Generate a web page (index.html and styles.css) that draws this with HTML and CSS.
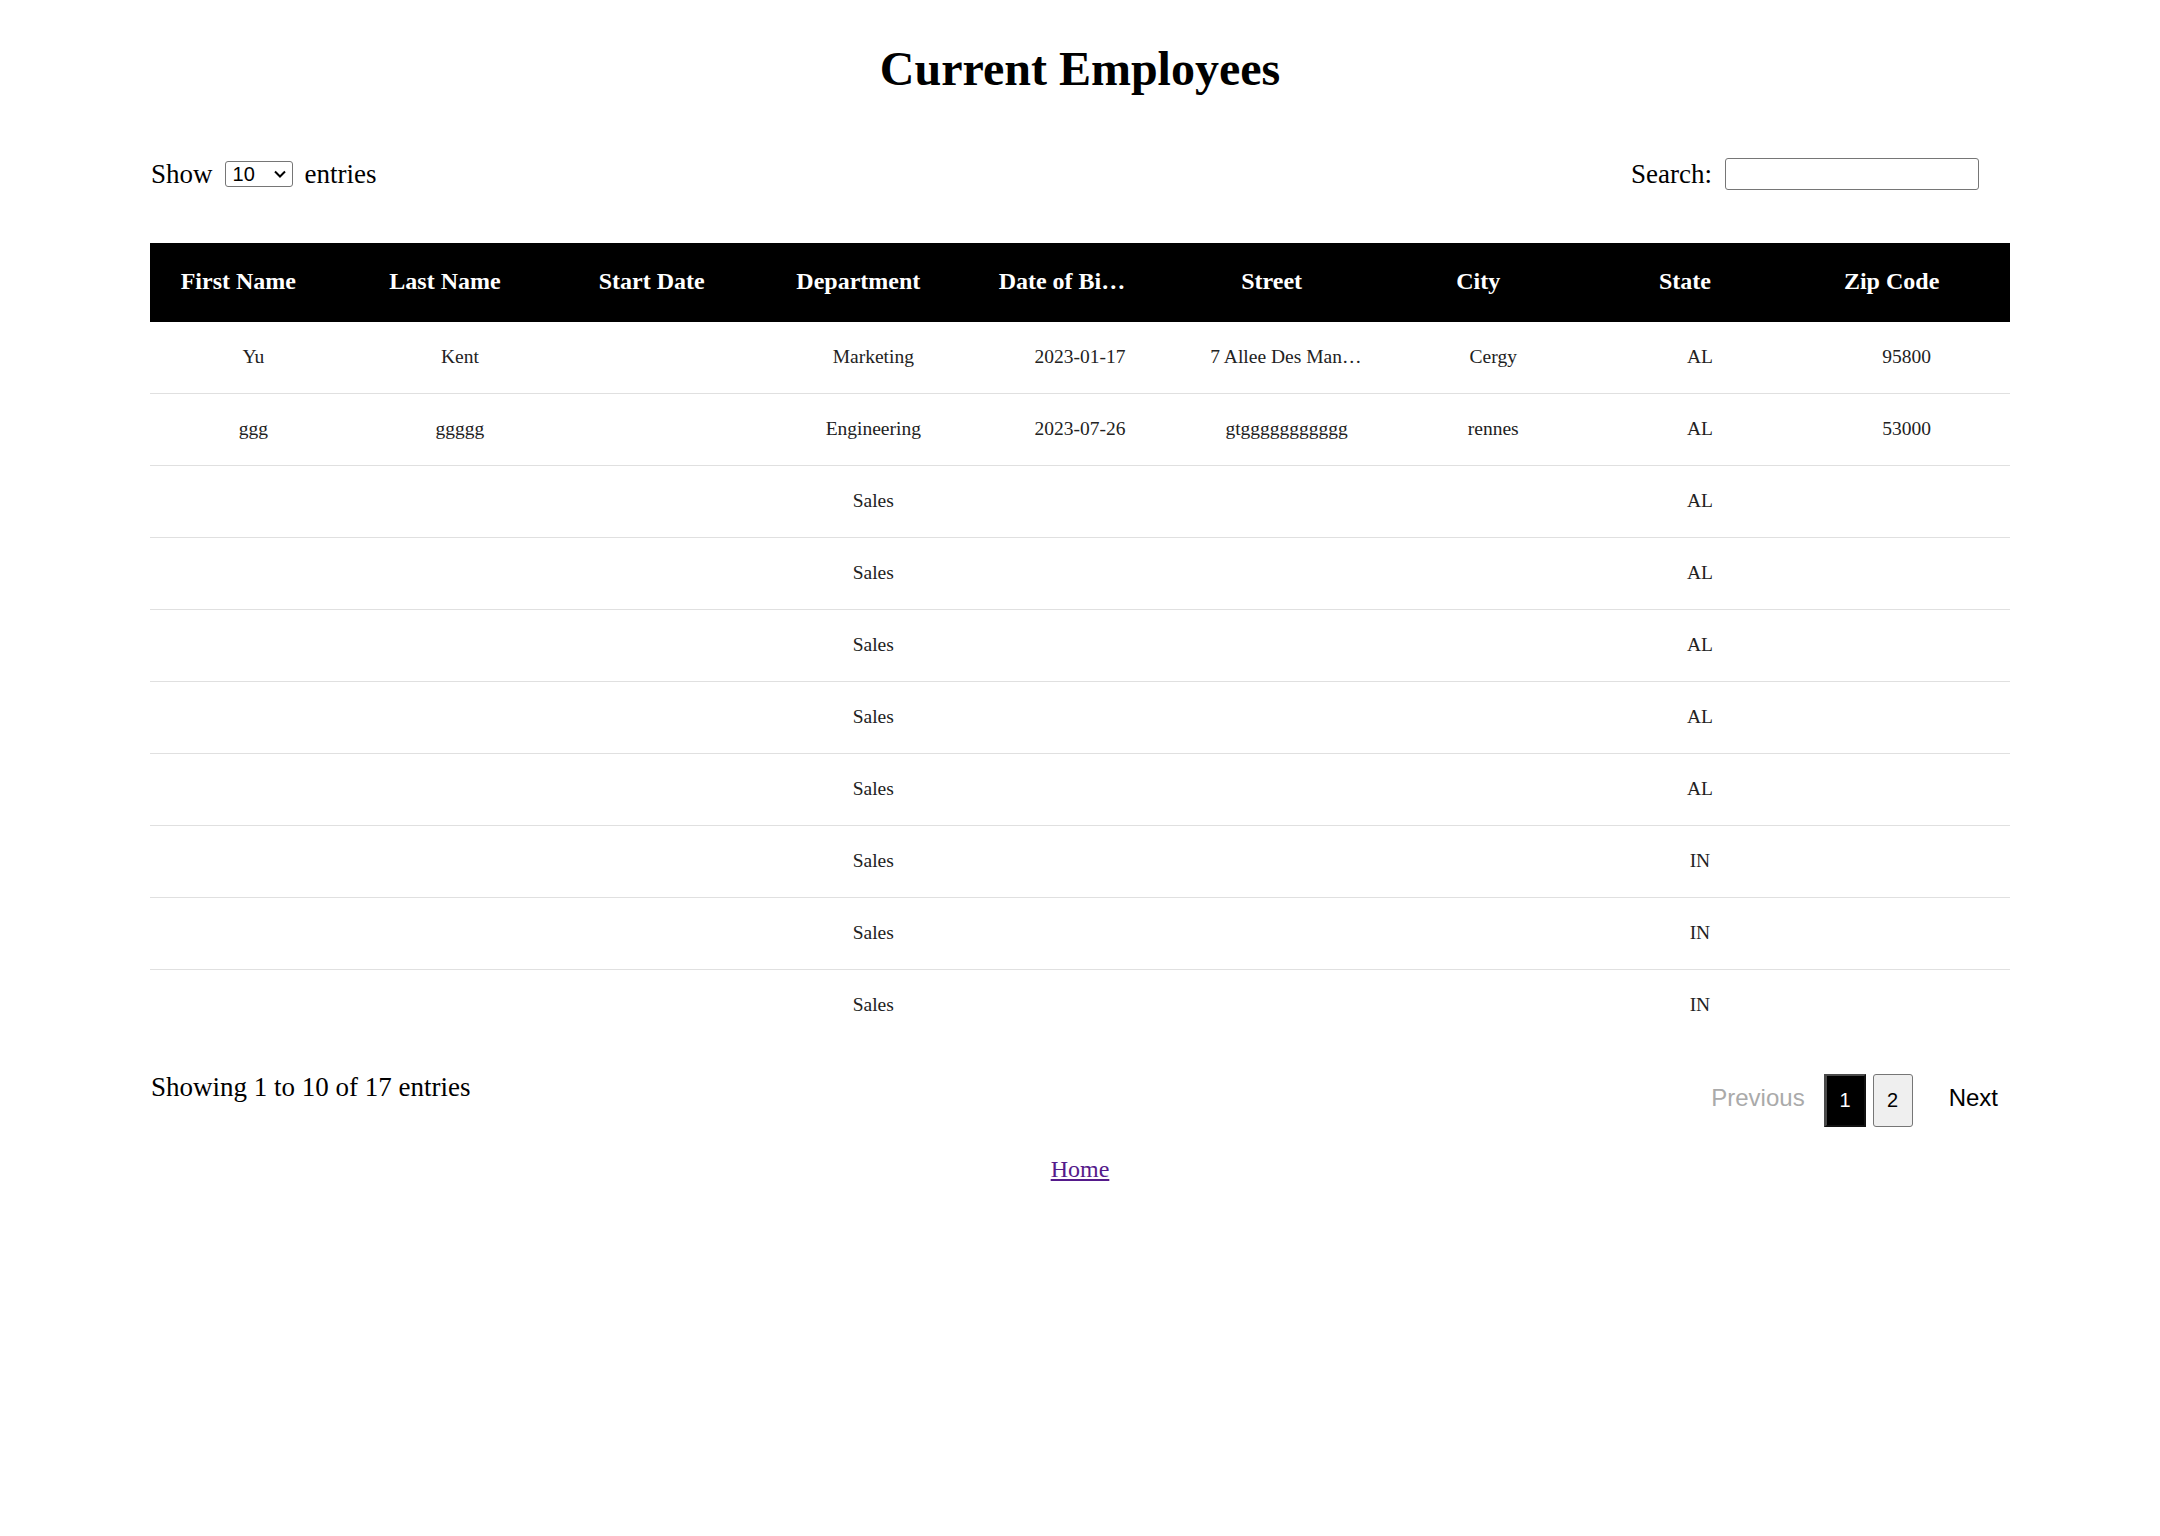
FILE: index.html
```html
<!DOCTYPE html>
<html lang="en">
<head>
<meta charset="utf-8">
<title>Current Employees</title>
<link rel="stylesheet" href="styles.css">
</head>
<body>
<div class="page">
  <h1 class="title">Current Employees</h1>

  <div class="controls">
    <label class="length">
      <span>Show</span>
      <span class="select-box">
        <select class="select"><option>10</option><option>25</option><option>50</option><option>100</option></select>
        <svg class="chev" width="12" height="8" viewBox="0 0 12 8"><path d="M1 1.5 L6 6.5 L11 1.5" fill="none" stroke="#000" stroke-width="2"/></svg>
      </span>
      <span>entries</span>
    </label>
    <label class="search">
      <span>Search:</span>
      <input class="search-input" type="search">
    </label>
  </div>

  <table class="grid">
    <thead>
      <tr class="head-row">
        <th>First Name</th><th>Last Name</th><th>Start Date</th><th>Department</th><th>Date of Birth</th><th>Street</th><th>City</th><th>State</th><th>Zip Code</th>
      </tr>
    </thead>
    <tbody>
      <tr><td>Yu</td><td>Kent</td><td></td><td>Marketing</td><td>2023-01-17</td><td>7 Allee Des Manants</td><td>Cergy</td><td>AL</td><td>95800</td></tr>
      <tr><td>ggg</td><td>ggggg</td><td></td><td>Engineering</td><td>2023-07-26</td><td>gtggggggggggg</td><td>rennes</td><td>AL</td><td>53000</td></tr>
      <tr><td></td><td></td><td></td><td>Sales</td><td></td><td></td><td></td><td>AL</td><td></td></tr>
      <tr><td></td><td></td><td></td><td>Sales</td><td></td><td></td><td></td><td>AL</td><td></td></tr>
      <tr><td></td><td></td><td></td><td>Sales</td><td></td><td></td><td></td><td>AL</td><td></td></tr>
      <tr><td></td><td></td><td></td><td>Sales</td><td></td><td></td><td></td><td>AL</td><td></td></tr>
      <tr><td></td><td></td><td></td><td>Sales</td><td></td><td></td><td></td><td>AL</td><td></td></tr>
      <tr><td></td><td></td><td></td><td>Sales</td><td></td><td></td><td></td><td>IN</td><td></td></tr>
      <tr><td></td><td></td><td></td><td>Sales</td><td></td><td></td><td></td><td>IN</td><td></td></tr>
      <tr><td></td><td></td><td></td><td>Sales</td><td></td><td></td><td></td><td>IN</td><td></td></tr>
    </tbody>
  </table>

  <div class="footer">
    <div class="info">Showing 1 to 10 of 17 entries</div>
    <div class="pager">
      <span class="pager-link disabled prev">Previous</span>
      <button class="page-btn current" type="button">1</button>
      <button class="page-btn" type="button">2</button>
      <span class="pager-link next">Next</span>
    </div>
  </div>

  <div class="home-wrap"><a class="home" href="#">Home</a></div>
</div>
</body>
</html>
```

FILE: styles.css
```css
html, body {
  margin: 0;
  padding: 0;
  background: #fff;
}

body {
  font-family: "Liberation Serif", "Times New Roman", serif;
  color: #000;
}

.page {
  width: 1860px;
  margin: 0 auto;
}

.title {
  margin: 41px 0 0 0;
  font-size: 48px;
  line-height: 56px;
  font-weight: bold;
  text-align: center;
}

.controls {
  margin-top: 61px;
  height: 32px;
  display: flex;
  justify-content: space-between;
  align-items: center;
  font-size: 27px;
  line-height: 32px;
}

.length,
.search {
  display: flex;
  align-items: center;
}

.length {
  gap: 12px;
  padding-left: 1px;
}

.search {
  gap: 13px;
  margin-right: 31px;
}

.select-box {
  display: inline-flex;
  align-items: center;
  box-sizing: border-box;
  width: 68px;
  height: 26px;
  border: 1px solid #767676;
  border-radius: 3px;
  padding: 0 6px 0 7px;
  background: #fff;
}

.select {
  appearance: none;
  -webkit-appearance: none;
  border: none;
  outline: none;
  background: transparent;
  font-family: "Liberation Sans", Arial, sans-serif;
  font-size: 20px;
  color: #000;
  padding: 0;
  margin: 0;
  width: 42px;
  height: 24px;
  line-height: 24px;
}

.chev {
  display: block;
  flex: none;
}

.search-input {
  box-sizing: border-box;
  width: 254px;
  height: 32px;
  border: 1px solid #767676;
  border-radius: 3px;
  padding: 0 4px;
  margin: 0;
  font-family: "Liberation Sans", Arial, sans-serif;
  font-size: 20px;
  outline: none;
}

.grid {
  margin-top: 53px;
  width: 1860px;
  table-layout: fixed;
  border-collapse: separate;
  border-spacing: 0;
}

.head-row {
  height: 79px;
  background: #000;
}

.grid th {
  padding: 0 52px 2px 22px;
  color: #fff;
  font-size: 24px;
  font-weight: bold;
  text-align: center;
  white-space: nowrap;
  overflow: hidden;
  text-overflow: ellipsis;
  background: #000;
}

.grid tbody tr {
  height: 72px;
}

.grid td {
  padding: 0 27px 2px;
  font-size: 19.5px;
  color: #222;
  text-align: center;
  white-space: nowrap;
  overflow: hidden;
  text-overflow: ellipsis;
  border-bottom: 1px solid #e0e0e0;
}

.grid tbody tr:last-child td {
  border-bottom: none;
}

.footer {
  margin-top: 30px;
  display: flex;
  justify-content: space-between;
  align-items: flex-start;
}

.info {
  font-size: 27px;
  line-height: 31px;
  padding-left: 1px;
}

.pager {
  margin-top: 2px;
  display: flex;
  align-items: center;
  height: 53px;
  font-family: "Liberation Sans", Arial, sans-serif;
}

.pager-link {
  font-size: 24px;
  color: #000;
  padding-bottom: 5px;
}

.pager-link.disabled {
  color: #aaa;
}

.prev {
  margin-right: 19px;
}

.next {
  margin-left: 36px;
  margin-right: 12px;
}

.page-btn {
  box-sizing: border-box;
  height: 53px;
  width: 40px;
  margin: 0;
  padding: 0;
  font-family: "Liberation Sans", Arial, sans-serif;
  font-size: 20px;
  color: #000;
  background: #efefef;
  border: 1px solid #767676;
  border-radius: 3px;
}

.page-btn + .page-btn {
  margin-left: 7px;
}

.page-btn.current {
  width: 42px;
  background: #000;
  color: #fff;
  border-radius: 0;
  border-style: solid;
  border-width: 2px 2px 2px 3px;
  border-color: #4a4a4a #111 #111 #4a4a4a;
}

.home-wrap {
  margin-top: 29px;
  text-align: center;
  font-size: 24px;
}

.home {
  color: #551a8b;
  text-decoration: underline;
}
```
